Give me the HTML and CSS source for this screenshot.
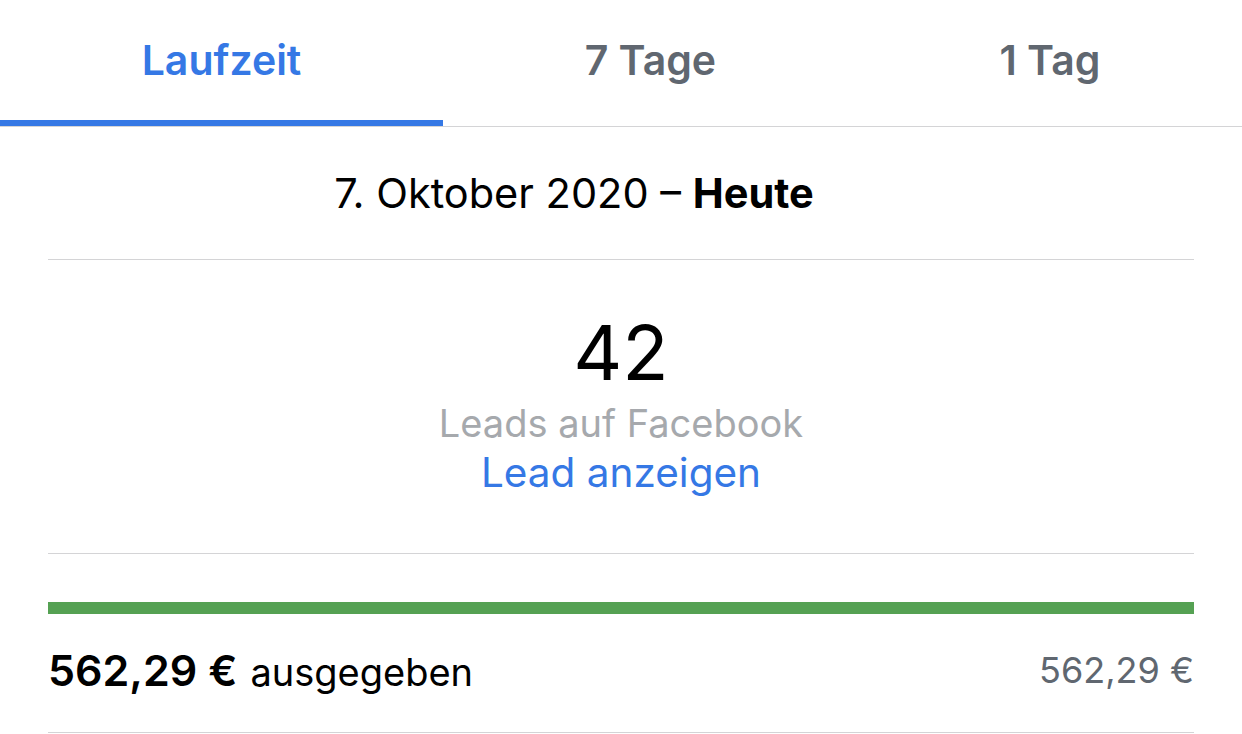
FILE: index.html
```html
<!DOCTYPE html>
<html lang="de">
<head>
<meta charset="utf-8">
<link rel="stylesheet" href="styles.css">
</head>
<body>
<div class="tabs">
  <div class="tab active"><span>Laufzeit</span></div>
  <div class="tab"><span>7 Tage</span></div>
  <div class="tab"><span>1 Tag</span></div>
</div>
<div class="content">
  <div class="date-row"><span>7. Oktober 2020 – <b>Heute</b></span></div>
  <div class="metric">
    <div class="metric-value">42</div>
    <div class="metric-label">Leads auf Facebook</div>
    <div class="metric-link">Lead anzeigen</div>
  </div>
  <div class="spend">
    <div class="spend-bar"></div>
    <div class="spend-row">
      <div class="spend-left"><span class="spend-amount">562,29 €</span><span class="spend-text">ausgegeben</span></div>
      <div class="spend-budget">562,29 €</div>
    </div>
  </div>
</div>
</body>
</html>
```
FILE: styles.css
```css
html, body {
  margin: 0;
  padding: 0;
  background: #ffffff;
}
body {
  font-family: Inter, "Noto Sans", sans-serif;
  color: #000000;
  width: 1242px;
  height: 734px;
  overflow: hidden;
}
.tabs {
  display: flex;
  border-bottom: 1px solid #d4d4d6;
  height: 126px;
}
.tab {
  flex: 1 1 auto;
  display: flex;
  align-items: center;
  justify-content: center;
  font-size: 41px;
  font-weight: 600;
  color: #606770;
  box-sizing: border-box;
  padding-bottom: 6px;
  white-space: nowrap;
}
.tab.active {
  color: #3578e5;
  border-bottom: 6px solid #3578e5;
  padding-bottom: 0;
}
.content {
  padding: 0 48px;
}
.date-row {
  height: 132px;
  display: flex;
  align-items: center;
  justify-content: center;
  padding-right: 94px;
  font-size: 41.5px;
  border-bottom: 1px solid #d4d4d6;
}
.date-row b {
  font-weight: 700;
}
.metric {
  height: 294px;
  border-bottom: 1px solid #d4d4d6;
  display: flex;
  flex-direction: column;
  align-items: center;
  padding-top: 50px;
  box-sizing: border-box;
}
.metric-value {
  font-size: 76px;
  line-height: 84px;
  font-weight: 400;
}
.metric-label {
  font-size: 38px;
  line-height: 50px;
  margin-top: 4px;
  color: #a6a9ad;
}
.metric-link {
  font-size: 40.5px;
  line-height: 50px;
  color: #3578e5;
}
.spend {
  padding-top: 48px;
  border-bottom: 1px solid #d4d4d6;
}
.spend-bar {
  height: 12px;
  background: #55a153;
}
.spend-row {
  height: 118px;
  display: flex;
  align-items: center;
  justify-content: space-between;
  padding-bottom: 6px;
  box-sizing: border-box;
}
.spend-left {
  display: flex;
  align-items: baseline;
  gap: 13px;
}
.spend-amount {
  font-size: 43px;
  font-weight: 600;
}
.spend-text {
  font-size: 38px;
}
.spend-budget {
  font-size: 36px;
  color: #606770;
}
```
